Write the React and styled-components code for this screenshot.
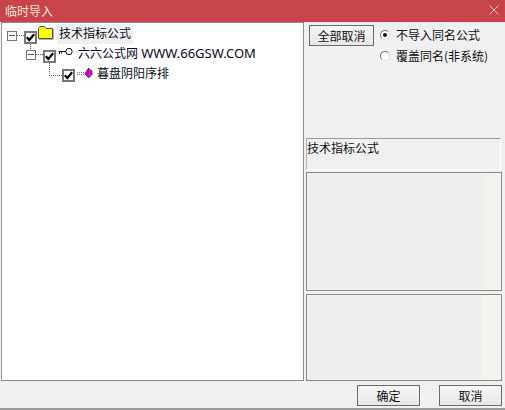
import React from "react";
import styled, { createGlobalStyle } from "styled-components";

const Global = createGlobalStyle`
  html, body { margin: 0; padding: 0; background: #f0f0f0; }
  * { box-sizing: border-box; }
`;

const Window = styled.div`
  width: 505px; height: 410px; display: flex; flex-direction: column;
  background: #f0f0f0; font: 12px/16px "Noto Sans CJK SC", sans-serif; color: #111;
  border-bottom: 2px solid #9a9a9a; overflow: hidden;
`;
const TitleBar = styled.div`
  height: 22px; flex: none; background: #c9434a; color: #f6e6d8;
  display: flex; align-items: center; justify-content: space-between; padding: 0 6px 0 5px;
`;
const CloseIcon = styled.svg`width: 10px; height: 10px; display: block; margin-top: -2px;`;
const Main = styled.div`display: flex; height: 359px; flex: none; padding-left: 1px;`;
const TreePanel = styled.div`
  width: 303px; flex: none; background: #fff; border: 1px solid #8c8c8c;
  border-left-color: #9a9a9a; padding: 3px 0 0 5px; display: flex; flex-direction: column;
`;
const Row = styled.div`
  display: flex; align-items: center; height: 19px; padding-left: ${p => p.$indent}px;
`;
const Expander = styled.span`
  width: 10px; height: 10px; flex: none; border: 1px solid #777; background: #fff; position: relative;
  &::after { content: ""; position: absolute; left: 1px; right: 1px; top: 3px; height: 1px; background: #555; }
`;
const Dots = styled.span`
  width: ${p => p.$w}px; height: 1px; flex: none;
  background: repeating-linear-gradient(90deg, #666 0 1px, transparent 1px 2px);
`;
const CheckWrap = styled.span`
  width: 13px; height: 13px; flex: none; border: 2px solid #777; background: #fff;
  position: relative; margin-top: 3px; display: flex; align-items: center; justify-content: center;
  ${p => p.$down && `
    &::after { content: ""; position: absolute; left: 4px; top: 11px; width: 1px; height: 7px;
      background: repeating-linear-gradient(180deg, #666 0 1px, transparent 1px 2px); }
  `}
  ${p => p.$elbow && `
    &::before { content: ""; position: absolute; left: -15px; top: 4px; width: 13px; height: 1px;
      background: repeating-linear-gradient(90deg, #666 0 1px, transparent 1px 2px); }
    &::after { content: ""; position: absolute; left: -15px; top: -8px; width: 1px; height: 12px;
      background: repeating-linear-gradient(180deg, #666 0 1px, transparent 1px 2px); }
  `}
`;
const Label = styled.span`
  font-family: "Noto Sans", "Noto Sans CJK SC", sans-serif; font-size: 12px; white-space: nowrap; color: #0a0a1a;
  margin-left: ${p => p.$gap}px; line-height: 20px; margin-top: ${p => p.$top || 0}px;
  ${p => p.$selected && `background: #f0f0f0; padding: 0 2px;`}
`;
const Latin = styled.span`font-size: 13px; letter-spacing: 0;`;
const Side = styled.div`
  flex: 1; display: flex; flex-direction: column; padding: 3px 4px 0 2px; min-width: 0;
`;
const TopControls = styled.div`
  display: flex; height: 113px; padding-left: 3px; align-items: flex-start; flex: none;
`;
const Button = styled.button`
  width: ${p => p.$w}px; height: 21px; padding: 0; margin: 0; flex: none;
  border: 1px solid #6f6a6a; background: linear-gradient(#f7f7f7, #e6e6e6);
  font: 12px/16px "Noto Sans CJK SC", sans-serif; color: #111;
`;
const Radios = styled.div`
  display: flex; flex-direction: column; gap: 5px; margin-left: 6px; padding-top: 2px;
`;
const RadioRow = styled.label`display: flex; align-items: center; height: 16px; gap: 6px; white-space: nowrap;`;
const Radio = styled.span`
  width: 10px; height: 10px; border-radius: 50%; background: #fff; border: 1px solid #777;
  border-right-color: #ddd; border-bottom-color: #ddd;
  display: flex; align-items: center; justify-content: center; flex: none;
  &::after { content: ""; width: 4px; height: 4px; border-radius: 50%; background: ${p => p.$on ? "#111" : "transparent"}; }
`;
const InfoBox = styled.div`
  width: 195px; height: 32px; flex: none; background: #f0f0f0;
  border: 1px solid #fff; border-top-color: #9a9a9a; border-left-color: #b4b4b4;
  padding: 2px 0 0; line-height: 14px;
`;
const Pane = styled.div`
  width: 196px; height: ${p => p.$h}px; flex: none; margin-top: ${p => p.$mt}px;
  border: 1px solid #8c8c8c;
  background: linear-gradient(90deg, #efefef 0 ${p => p.$edge}px, #f4f3f0 ${p => p.$edge}px);
`;
const Footer = styled.div`
  flex: 1; display: flex; justify-content: flex-end; align-items: flex-start; gap: 19px;
  padding: 4px 3px 0 0;
`;

const Folder = () => (
  <svg width="16" height="14" viewBox="0 0 16 14" style={{ flex: "none", display: "block", marginLeft: 1, marginTop: -6 }}>
    <defs>
      <pattern id="fill" width="2" height="2" patternUnits="userSpaceOnUse">
        <rect width="2" height="2" fill="#ffff00" />
        <rect width="1" height="1" fill="#eeee55" />
      </pattern>
    </defs>
    <path d="M0.5 12.5 V2.5 L2 0.5 H6.5 L8 2.5 H14.5 V12.5 Z" fill="url(#fill)" stroke="#55553f" />
    <path d="M1 13.5 H15.5 V3" fill="none" stroke="#b0b0b0" />
  </svg>
);
const Key = () => (
  <svg width="15" height="8" viewBox="0 0 15 8" style={{ flex: "none", display: "block", marginLeft: 2, marginTop: -5 }}>
    <circle cx="11" cy="3.5" r="3.2" fill="#fff" stroke="#111" />
    <path d="M8 3.5 H0.5 M1.5 3.5 V6 M3.5 3.5 V5.5" stroke="#111" fill="none" />
  </svg>
);
const Gem = () => (
  <svg width="16" height="11" viewBox="0 0 16 11" style={{ flex: "none", display: "block", marginLeft: 2, marginTop: -1 }}>
    <path d="M0 4.5 H8 M0 6.5 H8" stroke="#888" strokeDasharray="1 1" />
    <path d="M11.5 0.3 L15 3.2 V6.2 L11.5 10 L8 5.5 Z" fill="#f000e0" stroke="#222" strokeWidth="0.8" />
    <path d="M11.5 0.3 V5.5 L8 5.5" stroke="#7a0078" strokeWidth="0.6" fill="none" />
  </svg>
);
const Tick = () => (
  <svg width="9" height="9" viewBox="0 0 9 9" style={{ display: "block" }}>
    <path d="M0.8 4.2 L3.3 7 L8.2 1.2" fill="none" stroke="#000" strokeWidth="2.2" />
  </svg>
);

export default function App() {
  return (
    <>
      <Global />
      <Window>
        <TitleBar>
          <span>临时导入</span>
          <CloseIcon viewBox="0 0 10 10"><path d="M0.5 0.5 L9.5 9.5 M9.5 0.5 L0.5 9.5" stroke="#eec4c6" strokeWidth="1" /></CloseIcon>
        </TitleBar>
        <Main>
          <TreePanel>
            <Row $indent={0}>
              <Expander /><Dots $w={7} />
              <CheckWrap $down><Tick /></CheckWrap>
              <Folder />
              <Label $selected $gap={3} $top={-4}>技术指标公式</Label>
            </Row>
            <Row $indent={19}>
              <Expander /><Dots $w={7} />
              <CheckWrap><Tick /></CheckWrap>
              <Key />
              <Label $gap={5} $top={-2}>六六公式网 <Latin>WWW.66GSW.COM</Latin></Label>
            </Row>
            <Row $indent={55}>
              <CheckWrap $elbow><Tick /></CheckWrap>
              <Gem />
              <Label $gap={4}>暮盘阴阳序排</Label>
            </Row>
          </TreePanel>
          <Side>
            <TopControls>
              <Button $w={65}>全部取消</Button>
              <Radios>
                <RadioRow><Radio $on />不导入同名公式</RadioRow>
                <RadioRow><Radio />覆盖同名(非系统)</RadioRow>
              </Radios>
            </TopControls>
            <InfoBox>技术指标公式</InfoBox>
            <Pane $h={119} $mt={2} $edge={177} />
            <Pane $h={87} $mt={3} $edge={175} />
          </Side>
        </Main>
        <Footer>
          <Button $w={63}>确定</Button>
          <Button $w={63}>取消</Button>
        </Footer>
      </Window>
    </>
  );
}
